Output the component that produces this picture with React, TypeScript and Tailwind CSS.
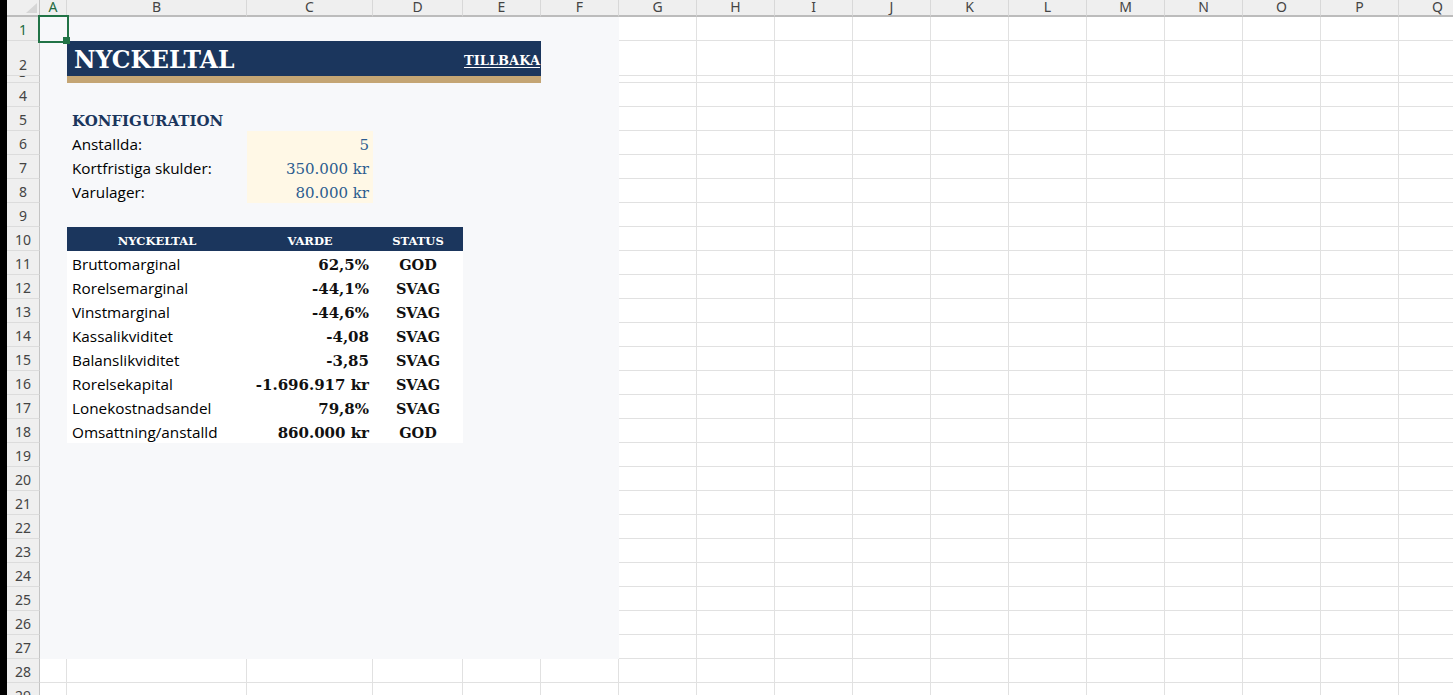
import type { ReactNode } from 'react'

const SERIF = "font-['DejaVu_Serif',serif]"
const SANS = "font-['Open_Sans',sans-serif]"

const HEAD_COLS: Array<{ letter: string; w: string }> = [
  { letter: 'A', w: 'w-[27px]' },
  { letter: 'B', w: 'w-[180px]' },
  { letter: 'C', w: 'w-[126px]' },
  { letter: 'D', w: 'w-[90px]' },
  { letter: 'E', w: 'w-[78px]' },
  { letter: 'F', w: 'w-[78px]' },
  ...['G', 'H', 'I', 'J', 'K', 'L', 'M', 'N', 'O', 'P', 'Q'].map((letter) => ({ letter, w: 'w-[78px]' })),
]

const ROW_H: Record<number, string> = { 1: 'h-[24px]', 2: 'h-[35px]', 3: 'h-[7px]' }

const CONFIG = [
  { label: 'Anstallda:', value: '5' },
  { label: 'Kortfristiga skulder:', value: '350.000 kr' },
  { label: 'Varulager:', value: '80.000 kr' },
]

const METRICS = [
  { name: 'Bruttomarginal', value: '62,5%', status: 'GOD' },
  { name: 'Rorelsemarginal', value: '-44,1%', status: 'SVAG' },
  { name: 'Vinstmarginal', value: '-44,6%', status: 'SVAG' },
  { name: 'Kassalikviditet', value: '-4,08', status: 'SVAG' },
  { name: 'Balanslikviditet', value: '-3,85', status: 'SVAG' },
  { name: 'Rorelsekapital', value: '-1.696.917 kr', status: 'SVAG' },
  { name: 'Lonekostnadsandel', value: '79,8%', status: 'SVAG' },
  { name: 'Omsattning/anstalld', value: '860.000 kr', status: 'GOD' },
]

function GridCell({ w }: { w: string }) {
  return <div className={`${w} h-full shrink-0 border-b border-r border-[#e1e1e1] bg-white`} />
}

function RowHead({ n }: { n: number }) {
  return (
    <div
      className={`flex h-full w-[33px] shrink-0 items-end justify-center overflow-hidden border-b border-r border-b-[#dcdcdc] border-r-[#c4c4c4] bg-[#efefef] pb-[2px] font-['Noto_Sans',sans-serif] text-[14px] leading-[16px] ${
        n === 1 ? 'text-[#1e6b41]' : 'text-[#444]'
      }`}
    >
      {n}
    </div>
  )
}

function PanelRow({ children }: { children?: ReactNode }) {
  return <div className="flex h-full w-[579px] shrink-0 bg-[#f7f8fa]">{children}</div>
}

function Panel({ n }: { n: number }) {
  if (n === 2) {
    return (
      <PanelRow>
        <div className="w-[27px] shrink-0" />
        <div className="flex w-[474px] shrink-0 items-end justify-between bg-[#1b365d] pl-[7px] pr-[1px]">
          <span className={`${SERIF} mb-[4px] text-[23.5px] font-bold leading-none text-white`}>NYCKELTAL</span>
          <span className={`${SERIF} mb-[9px] text-[13px] font-bold leading-none text-white underline underline-offset-2`}>
            TILLBAKA
          </span>
        </div>
      </PanelRow>
    )
  }
  if (n === 3) {
    return (
      <PanelRow>
        <div className="w-[27px] shrink-0" />
        <div className="w-[474px] shrink-0 bg-[#c4a574]" />
      </PanelRow>
    )
  }
  if (n === 5) {
    return (
      <PanelRow>
        <div className="w-[27px] shrink-0" />
        <div className={`${SERIF} flex w-[180px] shrink-0 items-end whitespace-nowrap pb-[2px] pl-[5px] text-[15px] font-bold leading-none text-[#1b365d]`}>
          KONFIGURATION
        </div>
      </PanelRow>
    )
  }
  if (n >= 6 && n <= 8) {
    const row = CONFIG[n - 6]
    return (
      <PanelRow>
        <div className="w-[27px] shrink-0" />
        <div className={`${SANS} w-[180px] shrink-0 whitespace-nowrap pl-[5px] pt-[3px] text-[15.3px] leading-[21px] text-black`}>
          {row.label}
        </div>
        <div className={`${SERIF} w-[126px] shrink-0 bg-[#fff8e6] pr-[4px] pt-[3px] text-right text-[15px] leading-[22px] text-[#2b5c8f]`}>
          {row.value}
        </div>
      </PanelRow>
    )
  }
  if (n === 10) {
    return (
      <PanelRow>
        <div className="w-[27px] shrink-0" />
        <div className={`${SERIF} flex w-[396px] shrink-0 bg-[#1b365d] pt-[6px] text-[11.5px] font-bold leading-[16px] text-white`}>
          <div className="w-[180px] text-center">NYCKELTAL</div>
          <div className="w-[126px] text-center">VARDE</div>
          <div className="w-[90px] text-center">STATUS</div>
        </div>
      </PanelRow>
    )
  }
  if (n >= 11 && n <= 18) {
    const m = METRICS[n - 11]
    return (
      <PanelRow>
        <div className="w-[27px] shrink-0" />
        <div className="flex w-[396px] shrink-0 bg-white pt-[3px]">
          <div className={`${SANS} w-[180px] whitespace-nowrap pl-[5px] text-[15.3px] leading-[21px] text-black`}>{m.name}</div>
          <div className={`${SERIF} w-[126px] whitespace-nowrap pr-[4px] text-right text-[15px] font-bold leading-[22px] text-[#111]`}>
            {m.value}
          </div>
          <div className={`${SERIF} w-[90px] text-center text-[14.5px] font-bold leading-[22px] text-[#111]`}>{m.status}</div>
        </div>
      </PanelRow>
    )
  }
  return <PanelRow />
}

export default function App() {
  const rows = Array.from({ length: 29 }, (_, i) => i + 1)

  return (
    <div className="relative flex h-[695px] w-[1453px] overflow-hidden bg-white">
      <div className="h-full w-[7px] shrink-0 bg-black" />
      <div className="flex w-[1446px] shrink-0 flex-col">
        {/* column headers */}
        <div className="flex h-[17px] shrink-0">
          <div className="relative h-full w-[33px] shrink-0 border-b-2 border-r border-b-[#bcbcbc] border-r-[#c4c4c4] bg-[#efefef]">
            <svg className="absolute bottom-[2px] right-[2px]" width="11" height="10" viewBox="0 0 11 10">
              <polygon points="11,0 11,10 0,10" fill="#d6d6d6" />
            </svg>
          </div>
          {HEAD_COLS.map((c) => (
            <div
              key={c.letter}
              className={`${c.w} h-full shrink-0 overflow-hidden border-b-2 border-r border-b-[#bcbcbc] border-r-[#d8d8d8] bg-[#efefef] text-center font-['Noto_Sans',sans-serif] text-[14px] leading-[14px] ${
                c.letter === 'A' ? 'text-[#1e6b41]' : 'text-[#444]'
              }`}
            >
              {c.letter}
            </div>
          ))}
        </div>

        {rows.map((n) => (
          <div key={n} className={`flex shrink-0 ${ROW_H[n] ?? 'h-[24px]'}`}>
            <RowHead n={n} />
            {n <= 27 ? (
              <Panel n={n} />
            ) : (
              HEAD_COLS.slice(0, 6).map((c) => <GridCell key={c.letter} w={c.w} />)
            )}
            {HEAD_COLS.slice(6).map((c) => (
              <GridCell key={c.letter} w={c.w} />
            ))}
          </div>
        ))}
      </div>

      {/* active cell A1 */}
      <div className="absolute left-[38px] top-[15px] h-[28px] w-[31px] border-2 border-[#217346]" />
      <div className="absolute left-[63px] top-[37px] h-[7px] w-[7px] bg-[#217346]" />
    </div>
  )
}
